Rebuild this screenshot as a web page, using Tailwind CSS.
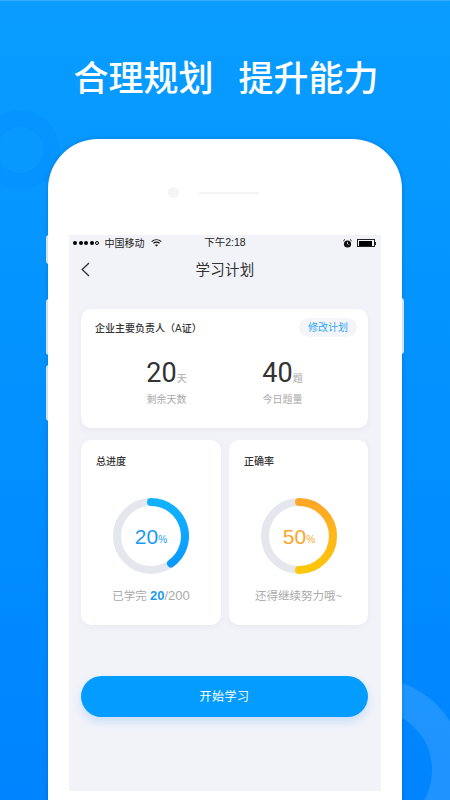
<!DOCTYPE html>
<html lang="zh-CN">
<head>
    <meta charset="UTF-8">
    <meta name="viewport" content="width=device-width, initial-scale=1.0">
    <title>学习计划</title>
    <script src="https://cdn.jsdelivr.net/npm/@tailwindcss/browser@4"></script>
</head>
<body class="m-0 font-['Liberation_Sans','Noto_Sans_CJK_SC',sans-serif]">
    <div class="relative w-[450px] h-[800px] overflow-hidden bg-gradient-to-b from-[#0a9dff] to-[#0084ff] border-t border-[#35adff]">
        <!-- background circles -->
        <div class="absolute left-[-20px] top-[109px] w-[80px] h-[80px] rounded-full bg-[#0080ff]/20"></div>
        <div class="absolute left-[-3px] top-[126px] w-[46px] h-[46px] rounded-full bg-[#0a9bff]/70"></div>
        <div class="absolute left-[280px] top-[677px] w-[184px] h-[184px] rounded-full border-[32px] border-white/12"></div>

        <h1 class="relative h-[138px] flex items-center justify-center pt-[12px] pl-[2px] gap-[25px] text-white text-[35px] font-medium font-['Noto_Sans_CJK_SC',sans-serif]">
            <span>合理规划</span><span>提升能力</span>
        </h1>

        <!-- side buttons -->
        <div class="absolute left-[46px] top-[234px] w-[3px] h-[29px] bg-white/90 rounded-l-sm"></div>
        <div class="absolute left-[46px] top-[298px] w-[3px] h-[56px] bg-white/90 rounded-l-sm"></div>
        <div class="absolute left-[46px] top-[364px] w-[3px] h-[56px] bg-white/90 rounded-l-sm"></div>
        <div class="absolute left-[401px] top-[297px] w-[3px] h-[56px] bg-white/90 rounded-r-sm"></div>

        <!-- phone -->
        <div class="relative ml-[48px] w-[354px] h-[680px] bg-white rounded-t-[50px] shadow-[0_0_4px_rgba(0,40,120,0.25)] px-[21px]">
            <div class="h-[96px] flex items-center justify-center gap-[20px] pt-[11px] pr-[24px]">
                <div class="w-[11px] h-[11px] rounded-full bg-[#f4f4f4]"></div>
                <div class="w-[60px] h-[2px] bg-[#f4f4f4]"></div>
            </div>

            <!-- screen -->
            <div class="w-[312px] h-[556px] bg-[#f2f3f9] font-['Liberation_Sans','Noto_Sans_CJK_SC',sans-serif]">
                <!-- status bar -->
                <div class="grid grid-cols-3 items-center h-[16px] px-[4px] text-[10px] text-[#222]">
                    <div class="flex items-center gap-[1.5px]">
                        <span class="w-[4px] h-[4px] rounded-full bg-black"></span>
                        <span class="w-[4px] h-[4px] rounded-full bg-black"></span>
                        <span class="w-[4px] h-[4px] rounded-full bg-black"></span>
                        <span class="w-[4px] h-[4px] rounded-full bg-black"></span>
                        <span class="w-[4px] h-[4px] rounded-full border-[0.5px] border-black"></span>
                        <span class="ml-[4px] whitespace-nowrap">中国移动</span>
                        <svg class="ml-[5px] shrink-0" width="11" height="8" viewBox="0 0 11 8" fill="none" stroke="#111" stroke-width="1.2">
                            <path d="M.7 2.6C3.5.1 7.5.1 10.3 2.6"/><path d="M2.4 4.3c1.8-1.5 4.4-1.5 6.2 0"/><path d="M5.5 7.6 4 6c.9-.6 2.1-.6 3 0z" fill="#111" stroke="none"/>
                        </svg>
                    </div>
                    <div class="text-center whitespace-nowrap text-[10.5px]">下午2:18</div>
                    <div class="flex items-center justify-end gap-[5px] pr-[1px]">
                        <svg width="9" height="9" viewBox="0 0 9 9">
                            <circle cx="4.5" cy="5" r="3.6" fill="#111"/><path d="M4.5 3v2l1.2.8" stroke="#fff" stroke-width=".7" fill="none"/><path d="M.3 2 2 .4M8.7 2 7 .4" stroke="#111" stroke-width="1"/>
                        </svg>
                        <div class="flex items-center">
                            <div class="w-[18px] h-[8px] border-[0.5px] border-[#222] p-[0.5px]">
                                <div class="w-[13px] h-full bg-black"></div>
                            </div>
                            <div class="w-[1px] h-[3px] bg-[#222]"></div>
                        </div>
                    </div>
                </div>

                <!-- nav -->
                <div class="relative h-[39px] flex items-center justify-center">
                    <svg class="absolute left-[12px] top-[11px]" width="9" height="15" viewBox="0 0 9 15" fill="none" stroke="#333" stroke-width="1.3">
                        <path d="M8 1 1.2 7.5 8 14"/>
                    </svg>
                    <span class="text-[14.5px] text-[#333] tracking-[0.2px]">学习计划</span>
                </div>

                <div class="pl-[12px] pr-[13px] pt-[19px]">
                    <!-- plan card -->
                    <div class="h-[119px] bg-white rounded-[10px] shadow-[0_2px_6px_rgba(120,130,170,0.08)]">
                        <div class="flex items-center justify-between pl-[14px] pr-[11px] pt-[9px]">
                            <span class="text-[10px] text-[#333] font-medium pt-[1px]">企业主要负责人（A证）</span>
                            <span class="w-[58px] h-[19px] rounded-full bg-[#f3f5f8] text-[#2ca6f5] text-[10px] flex items-center justify-center">修改计划</span>
                        </div>
                        <div class="flex justify-center pt-[20px]">
                            <div class="w-[116px] flex flex-col items-center">
                                <div class="flex items-baseline h-[32px] leading-[32px] text-[#333]"><span class="text-[27px] font-normal font-['Roboto',sans-serif]">20</span><span class="text-[10px] text-[#aaa]">天</span></div>
                                <div class="text-[10px] text-[#aaa] mt-[3px]">剩余天数</div>
                            </div>
                            <div class="w-[116px] flex flex-col items-center">
                                <div class="flex items-baseline h-[32px] leading-[32px] text-[#333]"><span class="text-[27px] font-normal font-['Roboto',sans-serif]">40</span><span class="text-[10px] text-[#aaa]">题</span></div>
                                <div class="text-[10px] text-[#aaa] mt-[3px]">今日题量</div>
                            </div>
                        </div>
                    </div>

                    <!-- stats cards -->
                    <div class="grid grid-cols-[140px_139px] gap-[8px] mt-[12px]">
                        <div class="h-[185px] bg-white rounded-[10px] shadow-[0_2px_6px_rgba(120,130,170,0.08)] flex flex-col items-center">
                            <div class="self-start pl-[15px] pt-[15px] text-[10px] leading-[14px] text-[#333] font-medium">总进度</div>
                            <div class="relative w-[76px] h-[76px] mt-[29px]">
                                <svg width="76" height="76" viewBox="0 0 76 76" fill="none">
                                    <defs>
                                        <linearGradient id="blueRing" x1="0" y1="0" x2="0" y2="1">
                                            <stop offset="0" stop-color="#12b2ff"/>
                                            <stop offset="1" stop-color="#0a9aff"/>
                                        </linearGradient>
                                    </defs>
                                    <circle cx="38" cy="38" r="34" stroke="#e4e7ee" stroke-width="8"/>
                                    <path d="M38 4a34 34 0 0 1 20 61.5" stroke="url(#blueRing)" stroke-width="8" stroke-linecap="round"/>
                                </svg>
                                <div class="absolute inset-0 flex items-center justify-center text-[#1a9bf0]"><span class="text-[21px] leading-none">20</span><span class="text-[10px] mt-[6px]">%</span></div>
                            </div>
                            <div class="mt-[14px] text-[11.5px] leading-[16px] text-[#aaa] whitespace-nowrap">已学完 <span class="text-[13px] text-[#1a9bf0] font-bold">20</span><span class="text-[13px]">/200</span></div>
                        </div>
                        <div class="h-[185px] bg-white rounded-[10px] shadow-[0_2px_6px_rgba(120,130,170,0.08)] flex flex-col items-center">
                            <div class="self-start pl-[15px] pt-[15px] text-[10px] leading-[14px] text-[#333] font-medium">正确率</div>
                            <div class="relative w-[76px] h-[76px] mt-[29px] ml-[1px]">
                                <svg width="76" height="76" viewBox="0 0 76 76" fill="none">
                                    <defs>
                                        <linearGradient id="yellowRing" x1="0" y1="0" x2="0" y2="1">
                                            <stop offset="0" stop-color="#ffa726"/>
                                            <stop offset="1" stop-color="#ffc60a"/>
                                        </linearGradient>
                                    </defs>
                                    <circle cx="38" cy="38" r="34" stroke="#e4e7ee" stroke-width="8"/>
                                    <path d="M38 4a34 34 0 0 1 0 68" stroke="url(#yellowRing)" stroke-width="8" stroke-linecap="round"/>
                                </svg>
                                <div class="absolute inset-0 flex items-center justify-center text-[#f9a62b]"><span class="text-[21px] leading-none">50</span><span class="text-[10px] mt-[6px]">%</span></div>
                            </div>
                            <div class="mt-[14px] text-[11.5px] leading-[16px] text-[#aaa] whitespace-nowrap">还得继续努力哦~</div>
                        </div>
                    </div>

                    <button class="mt-[51px] w-full h-[41px] rounded-full bg-[#049dff] text-white text-[12px] tracking-[0.5px] shadow-[0_5px_10px_rgba(30,130,240,0.18)]">开始学习</button>
                </div>
            </div>
        </div>
    </div>
</body>
</html>
